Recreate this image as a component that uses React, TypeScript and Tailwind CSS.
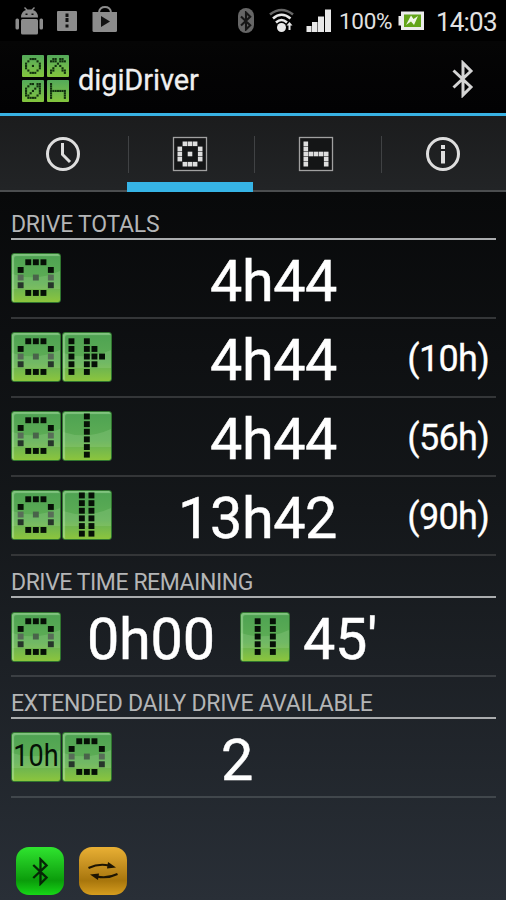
import React from 'react';

type Dot = [number, number, string?];

const WHEEL: Dot[] = [
  [17, 9], [24.6, 9], [32.2, 9],
  [9.4, 16.7], [39.6, 16.7],
  [9.4, 24.3, '#586d58'], [24.6, 24.3, '#49634a'], [39.6, 24.3, '#586d58'],
  [9.4, 32, '#26352a'], [39.6, 32, '#26352a'],
  [17, 39.7], [24.6, 39.7], [32.2, 39.7],
];

const column = (x: number, rows: number[]): Dot[] => rows.map((y) => [x, y] as Dot);

const FIVE = [9, 16.7, 24.3, 32, 39.7];
const SIX = [5.2, 12.9, 20.5, 28.1, 35.8, 43.4];

const DAY: Dot[] = [...column(9.2, FIVE), ...column(24.6, FIVE), ...column(32.2, [16.7, 24.3, 32]), [39.8, 24.3]];
const WEEK: Dot[] = column(24.6, SIX);
const FORTNIGHT: Dot[] = [...column(19.6, SIX), ...column(29.2, SIX)];
const BREAK: Dot[] = [...column(17.4, FIVE), ...column(32.6, FIVE)];

interface TileProps {
  dots?: Dot[];
  label?: string;
}

const Tile: React.FC<TileProps> = ({ dots = [], label }) => (
  <div className="relative h-[50px] w-[50px] shrink-0 overflow-hidden rounded-[3px] border border-[#30752f] bg-linear-to-b from-[#4da252] via-[#5fae55] via-60% to-[#8cc53c] shadow-[inset_2px_2px_1px_rgba(190,235,180,0.45)]">
    <svg viewBox="0 0 50 50" className="absolute -top-px -left-px h-[50px] w-[50px]">
      <path d="M1 21 Q25 29 49 18 V36 H1 Z" fill="#b5e3a6" opacity="0.2" />
      {dots.map(([x, y, fill], i) => (
        <rect key={i} x={x - 2.7} y={y - 2.7} width="5.900" height="5.900" fill={fill || '#061006'} />
      ))}
    </svg>
    {label && (
      <span className="absolute inset-x-0 top-[4px] flex justify-center text-[31px] leading-[38px] text-[#061006]">
        <span className="scale-x-[0.87] whitespace-nowrap">{label}</span>
      </span>
    )}
  </div>
);

const BluetoothGlyph: React.FC<{ className?: string; width?: number }> = ({ className, width = 2.5 }) => (
  <svg viewBox="0 0 22 38" className={className} fill="none" stroke="currentColor" strokeWidth={width}>
    <path d="M1.5 10.5 L19 27 L11 35 V3 L19 11 L1.5 27.5" />
  </svg>
);

const StatusBar = () => (
  <div className="flex h-[41px] items-center bg-black">
    <svg width="240" height="41" viewBox="0 0 240 41" fill="#8c8c8c">
      <path d="M21 17.500 Q21 11.500 26 10 L24 8 L25 7 L27.500 9.500 H31.500 L34 7 L35 8 L33 10 Q38 11.500 38 17.500 Z" />
      <rect x="21" y="19" width="17" height="15.500" rx="1.500" />
      <rect x="15.500" y="18.500" width="3.500" height="11" rx="1.500" />
      <rect x="39.500" y="18.500" width="3.500" height="11" rx="1.500" />
      <path d="M25.500 13.500h2v1.500h-2zM31.500 13.500h2v1.500h-2z" fill="#111" />
      <rect x="57" y="11" width="20" height="20" rx="1" />
      <path d="M65.500 13.500h3v3.500h-3zM65.500 18h3v4h-3zM65.500 24.500h3v3h-3z" fill="#111" />
      <path d="M99 12 Q100 7 105 7 Q110 7 111 12" fill="none" stroke="#8c8c8c" strokeWidth="2" />
      <path d="M92.500 12 H117 V30.500 Q117 32 115.500 32 H94 Q92.500 32 92.500 30.500 Z" />
      <path d="M101 16 L110 21.500 L101 27 Z" fill="#111" />
    </svg>
    <div className="ml-[-2px] flex h-[25px] w-[16px] items-center justify-center rounded-full bg-[#666666]">
      <BluetoothGlyph className="h-[20px] w-[12px] text-[#161616]" width={4} />
    </div>
    <svg width="88" height="41" viewBox="254 0 88 41" className="-mr-[3px]" fill="#e8e8e8">
      <g fill="none" stroke="#e8e8e8" strokeWidth="2.600">
        <path d="M270 14.500 Q281.500 5.500 293 14.500" stroke="#666" />
        <path d="M273 18.500 Q281.500 11 290.500 18.500" />
        <path d="M276 22.500 Q281.500 17.500 287 22.500" />
      </g>
      <circle cx="281.500" cy="27.500" r="4.500" />
      <path d="M286.500 25.500 l3 -3.500 l3 3.500 h-2 v4.500 h-2 v-4.500z" />
      <path d="M306.500 26h5v6h-5zM312 22h5.500v10h-5.500zM318 16.500h6v15.500h-6zM325 9.500h6v22.500h-6z" />
    </svg>
    <span className="mt-[2px] w-[54px] text-[22.5px] leading-none tracking-[-0.3px] whitespace-nowrap text-[#e2e2e2]">100%</span>
    <svg width="26" height="41" viewBox="0 0 26 41" className="ml-[5px]">
      <path d="M3 11.500 H26 V30 H3 V25.500 H.500 V16 H3 Z" fill="#ececec" />
      <path d="M6 14.500 H23 V27 H6 Z" fill="#63a51a" />
      <path d="M8 25 L13 15.500 L15.500 19 L20 16 L16 25 L13 21.500 Z" fill="#f1f7e8" />
    </svg>
    <span className="mt-[2px] ml-[12px] text-[26px] leading-none tracking-[-0.8px] text-[#e2e2e2]">14:03</span>
  </div>
);

const logoTiles = [
  ['0011100', '0100010', '1000001', '1001001', '1000001', '0100010', '0011100'],
  ['0110110', '1110111', '0001000', '0010100', '0100010', '1100011', '1000001'],
  ['0011011', '0100011', '1000101', '1001001', '1010001', '1100010', '0111100'],
  ['1000000', '1000000', '1000000', '1111111', '1000001', '1000001', '1000001'],
];

const Logo = () => (
  <div className="mt-[3px] grid w-[47px] grid-cols-2 gap-[3px]">
    {logoTiles.map((rows, t) => (
      <svg key={t} viewBox="0 0 22 22" className="h-[22px] w-[22px] rounded-[1px] bg-linear-to-b from-[#53a959] to-[#83c53c]">
        {rows.map((row, y) =>
          row.split('').map((c, x) =>
            c === '1' ? <rect key={`${x}-${y}`} x={3 + x * 2.3} y={3 + y * 2.3} width="2.100" height="2.100" fill="#12300f" /> : null
          )
        )}
      </svg>
    ))}
  </div>
);

const TitleBar = () => (
  <div className="flex h-[75px] items-center border-b-[3px] border-[#38b2e4] bg-linear-to-b from-[#050505] to-[#020203] pr-[32px] pl-[22px]">
    <Logo />
    <h1 className="mt-[6px] ml-[9px] text-[29px] leading-none tracking-[-0.1px] text-[#f0f0f0] [-webkit-text-stroke:0.3px]">digiDriver</h1>
    <BluetoothGlyph className="mt-[3px] ml-auto h-[38px] w-[22px] text-[#d4d4d4]" width={3} />
  </div>
);

const MatrixIcon: React.FC<{ rows: string[] }> = ({ rows }) => (
  <svg width="36" height="36" viewBox="0 0 36 36">
    <rect x="1.500" y="1.500" width="33" height="33" fill="#141516" stroke="#a0a0a0" strokeWidth="1.300" />
    {rows.map((row, y) =>
      row.split('').map((c, x) =>
        c === '1' ? <rect key={`${x}-${y}`} x={5.500 + x * 5.100} y={5.500 + y * 5.100} width="4.600" height="4.600" fill="#dedede" /> : null
      )
    )}
  </svg>
);

const tabs = [
  <svg width="36" height="36" viewBox="0 0 36 36" fill="none" stroke="#dedede">
    <circle cx="18" cy="18" r="15.500" strokeWidth="3" />
    <path d="M17.500 7 V18.500 L25 26" strokeWidth="3" />
  </svg>,
  <MatrixIcon rows={['01110', '10001', '10101', '10001', '01110']} />,
  <MatrixIcon rows={['10000', '10000', '11111', '10001', '10001']} />,
  <svg width="36" height="36" viewBox="0 0 36 36" fill="none" stroke="#dedede">
    <circle cx="18" cy="18" r="15.500" strokeWidth="3" />
    <path d="M18 15 V27.500 M18 9 V13" strokeWidth="4" />
  </svg>,
];

const TabBar = () => (
  <div className="flex h-[76px] border-b-2 border-[#4b4d4f] bg-linear-to-b from-[#1b1c1d] to-[#222426]">
    {tabs.map((icon, i) => (
      <div key={i} className="relative flex flex-1 items-center justify-center pt-[2px]">
        {icon}
        {i > 0 && <span className="absolute top-[20px] left-[1px] h-[37px] w-px bg-[#404244]" />}
        {i === 1 && <span className="absolute inset-x-0 -bottom-[2px] h-[10px] bg-[#36b4e6]" />}
      </div>
    ))}
  </div>
);

const Heading: React.FC<{ children: React.ReactNode; className: string }> = ({ children, className }) => (
  <h2 className={`flex items-end border-b-2 border-[#aaacae] pb-px text-[23px] leading-[24px] whitespace-nowrap text-[#b4b5b6] ${className}`}>
    {children}
  </h2>
);

interface TotalRowProps {
  dots?: Dot[];
  value: string;
  limit?: string;
}

const TotalRow: React.FC<TotalRowProps> = ({ dots, value, limit }) => (
  <div className="flex h-[79px] items-center border-b-2 border-[#343638]">
    <div className="mb-[2px] flex w-[103px] gap-[1px]">
      <Tile dots={WHEEL} />
      {dots && <Tile dots={dots} />}
    </div>
    <span className="mt-[6px] w-[223px] text-right text-[57.5px] leading-none tracking-[-0.4px] [-webkit-text-stroke:0.5px]">{value}</span>
    {limit && <span className="mt-[2px] ml-auto pr-[7px] text-[36px] leading-none tracking-[-0.7px] [-webkit-text-stroke:0.3px]">{limit}</span>}
  </div>
);

const App = () => (
  <div className="flex h-[900px] w-[506px] flex-col overflow-hidden bg-black font-['Roboto',sans-serif] text-white">
    <StatusBar />
    <TitleBar />
    <TabBar />
    <main className="flex flex-1 flex-col bg-linear-to-b from-[#08090a] via-[#14171a] via-45% to-[#292f37] pr-[10px] pl-[11px]">
      <Heading className="h-[48px] tracking-[-0.25px]">DRIVE TOTALS</Heading>
      <TotalRow value="4h44" />
      <TotalRow dots={DAY} value="4h44" limit="(10h)" />
      <TotalRow dots={WEEK} value="4h44" limit="(56h)" />
      <TotalRow dots={FORTNIGHT} value="13h42" limit="(90h)" />

      <Heading className="h-[42px] tracking-[-0.45px]">DRIVE TIME REMAINING</Heading>
      <div className="flex h-[79px] items-center border-b-2 border-[#3b3f43]">
        <Tile dots={WHEEL} />
        <span className="mt-[7px] ml-[26px] w-[153px] text-[57.5px] leading-none tracking-[-0.2px] [-webkit-text-stroke:0.5px]">0h00</span>
        <Tile dots={BREAK} />
        <span className="mt-[7px] ml-[13px] text-[57.5px] leading-none tracking-[-0.2px] [-webkit-text-stroke:0.5px]">45'</span>
      </div>

      <Heading className="h-[42px] tracking-[-0.3px]">EXTENDED DAILY DRIVE AVAILABLE</Heading>
      <div className="flex h-[79px] items-center border-b-2 border-[#41474c]">
        <div className="mb-px flex gap-[1px]">
          <Tile label="10h" />
          <Tile dots={WHEEL} />
        </div>
        <span className="mt-[7px] ml-[109px] text-[57.5px] leading-none [-webkit-text-stroke:0.5px]">2</span>
      </div>

      <div className="mt-[49px] flex gap-[15px] pl-[5px]">
        <div className="flex h-[48px] w-[48px] items-center justify-center rounded-[13px] bg-linear-to-b from-[#2fe52f] via-[#0a9c0a] via-70% to-[#17d817]">
          <BluetoothGlyph className="h-[29px] w-[17px] text-[#062606]" width={3} />
        </div>
        <div className="flex h-[48px] w-[48px] items-center justify-center rounded-[13px] bg-linear-to-b from-[#e9b034] via-[#a8760c] via-70% to-[#d69d1e]">
          <svg width="32" height="20" viewBox="0 0 32 20" fill="none" stroke="#1d1503" strokeWidth="2">
            <path d="M1.500 7 Q12 2 22 4.500" />
            <path d="M21 1 L29 6.500 L20 7.500 Z" fill="#1d1503" stroke="none" />
            <path d="M30.500 13 Q20 18 10 15.500" />
            <path d="M11 19 L3 13.500 L12 12.500 Z" fill="#1d1503" stroke="none" />
          </svg>
        </div>
      </div>
    </main>
  </div>
);

export default App;
